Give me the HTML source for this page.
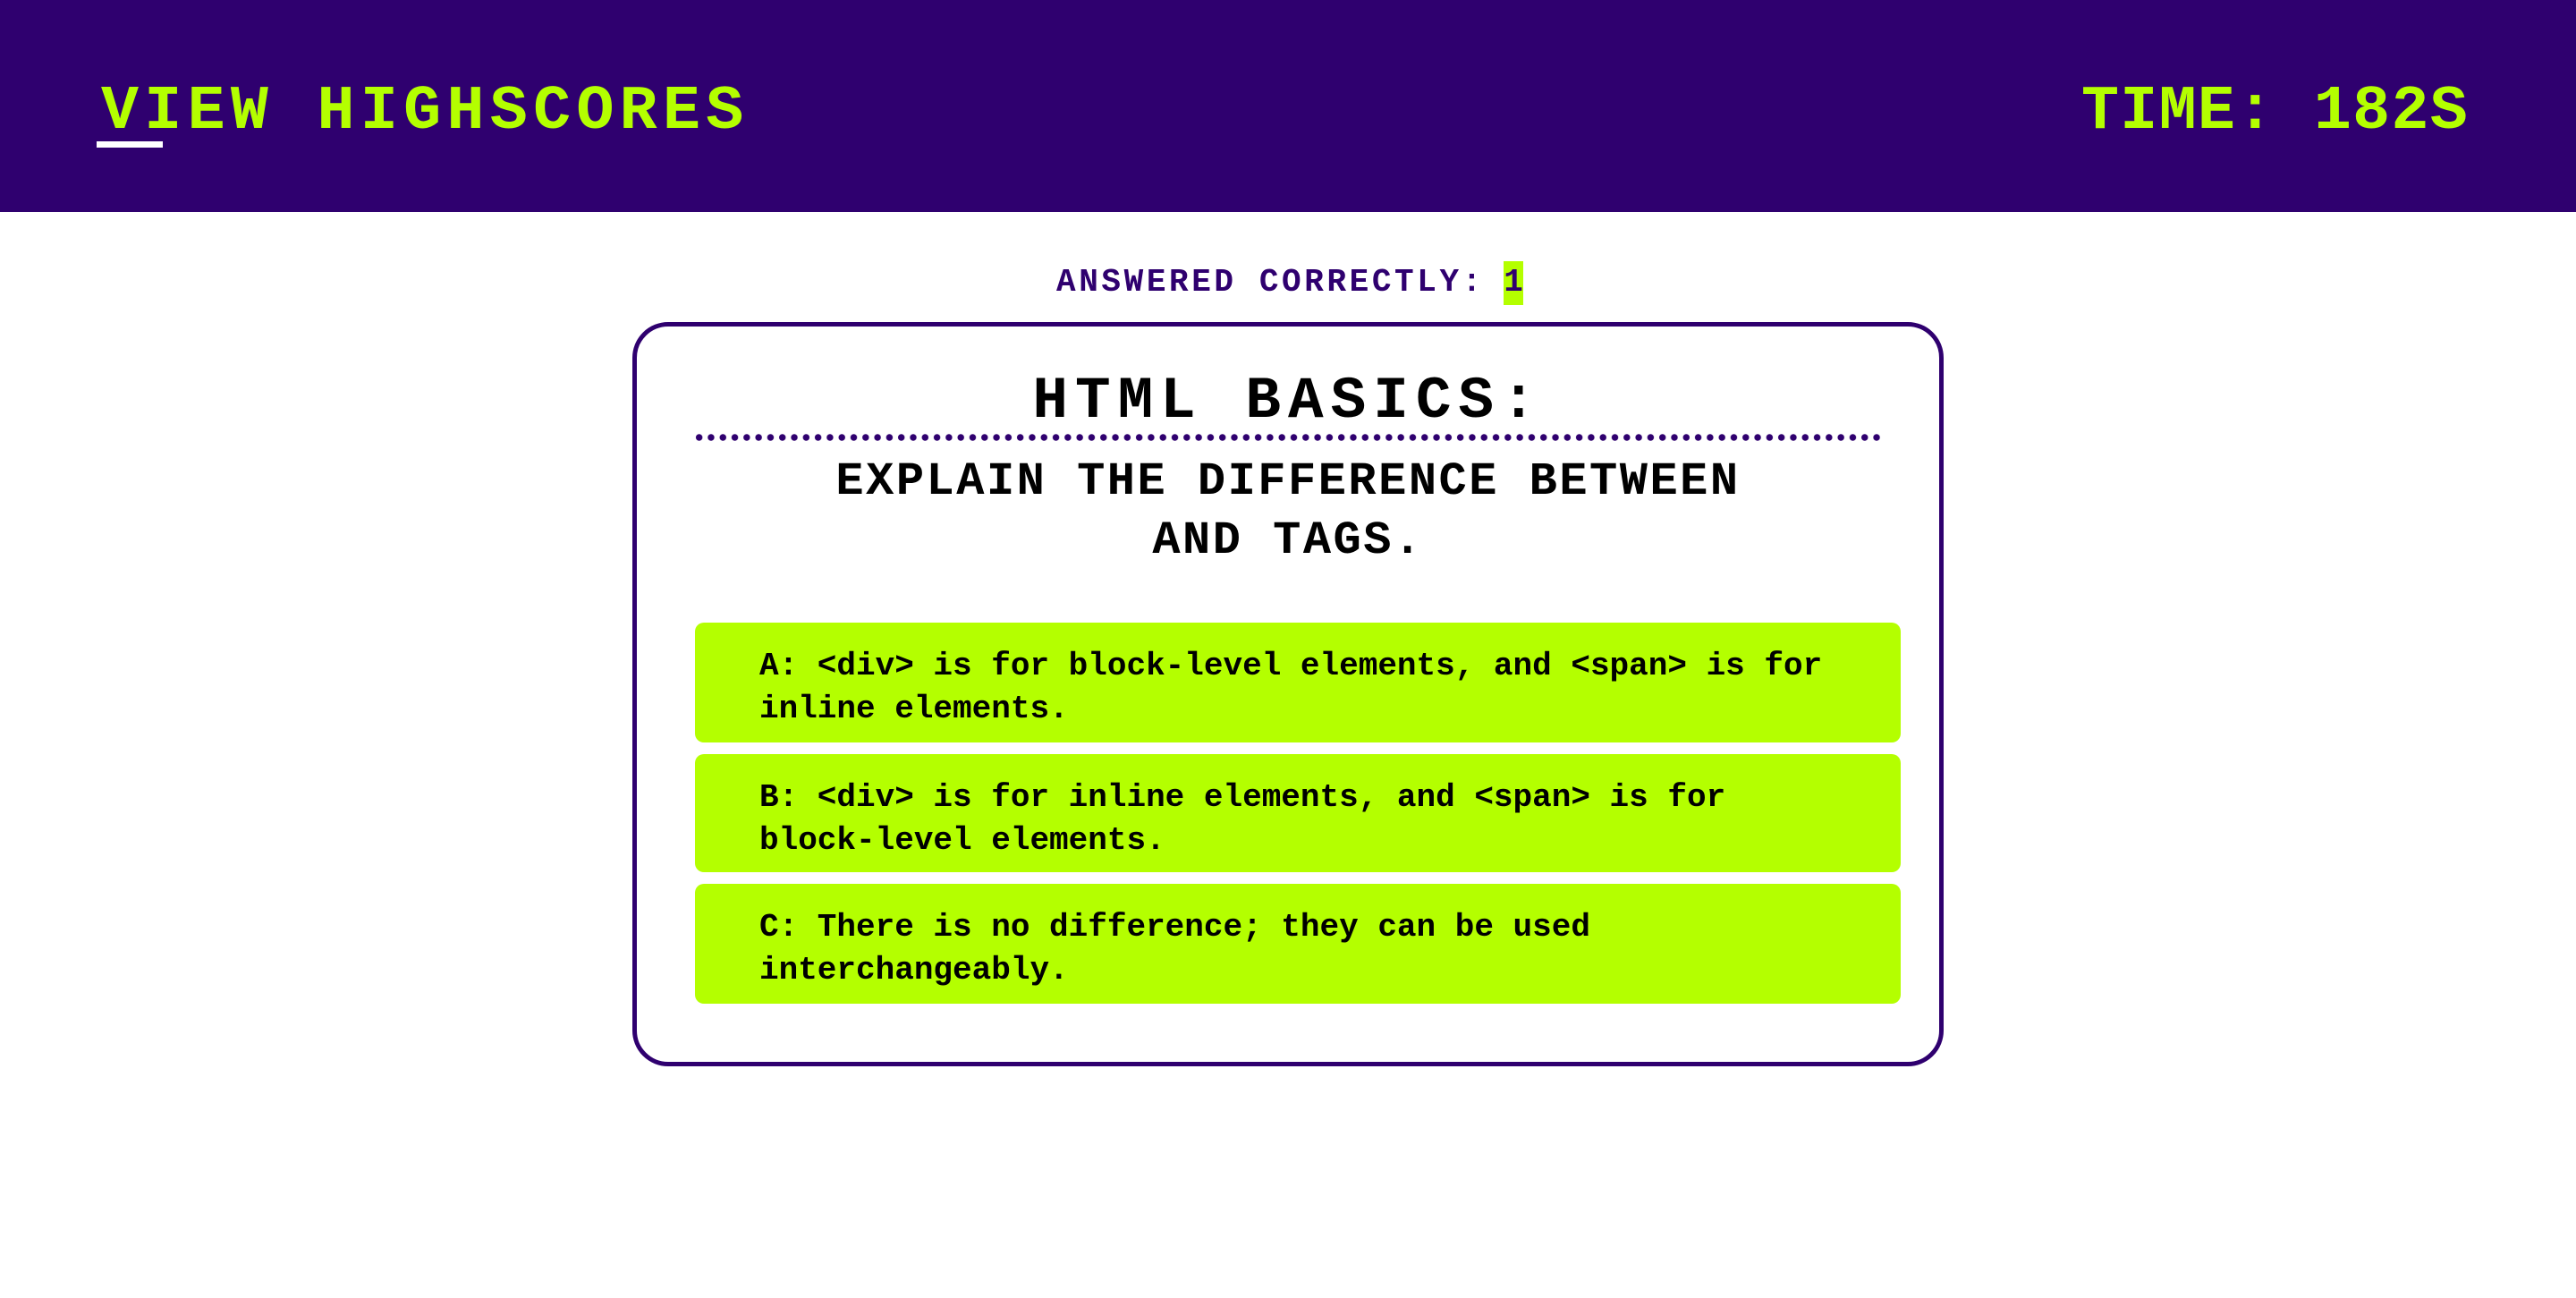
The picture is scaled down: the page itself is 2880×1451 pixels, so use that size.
<!DOCTYPE html>
<html><head><meta charset="utf-8"><style>
*{margin:0;padding:0;box-sizing:border-box}
body{width:2880px;height:1451px;background:#fff;position:relative;overflow:hidden;font-family:"Liberation Mono",monospace}
.hdr{position:absolute;left:0;top:0;width:2880px;height:237px;background:#2f006f}
.t{position:absolute;white-space:nowrap;font-weight:bold;line-height:1}
#vh{left:113px;top:91px;font-size:70px;color:#b4ff00;letter-spacing:6.3px}
#ul{position:absolute;left:108px;top:158px;width:74px;height:7px;background:#fff}
#tm{left:2327px;top:91px;font-size:70px;color:#b4ff00;letter-spacing:1.3px}
#ac{left:1181px;top:292px;font-size:36px;color:#2f006f;letter-spacing:3.6px}
#ac span{display:inline-block;background:#b4ff00;width:22px;padding:6px 0 7px;letter-spacing:0;text-align:center;margin-left:-4px}
.card{position:absolute;left:707px;top:360px;width:1466px;height:832px;border:5px solid #2f006f;border-radius:40px}
.ctr{position:absolute;left:707px;width:1466px;text-align:center;font-weight:bold;white-space:nowrap;line-height:1;color:#000}
#title{top:416px;font-size:66px;letter-spacing:8px}
#dots{position:absolute;left:775px;top:485px;width:1332px;height:8px;background:radial-gradient(circle,#2f006f 3.4px,transparent 4px) 0 0/13.3px 8px repeat-x}
#q1{top:513px;font-size:52px;letter-spacing:2.5px}
#q2{top:579px;font-size:52px;letter-spacing:2.5px}
.ans{position:absolute;left:777px;width:1348px;background:#b4ff00;border-radius:10px;padding:25px 0 0 72px;font-size:36px;font-weight:bold;line-height:48px;color:#000;white-space:pre}
</style></head><body>
<div class="hdr"></div>
<div class="t" id="vh">VIEW HIGHSCORES</div>
<div id="ul"></div>
<div class="t" id="tm">TIME: 182S</div>
<div class="t" id="ac">ANSWERED CORRECTLY: <span>1</span></div>
<div class="card"></div>
<div class="ctr" id="title">HTML BASICS:</div>
<div id="dots"></div>
<div class="ctr" id="q1">EXPLAIN THE DIFFERENCE BETWEEN</div>
<div class="ctr" id="q2">AND TAGS.</div>
<div class="ans" style="top:696px;height:134px">A: &lt;div&gt; is for block-level elements, and &lt;span&gt; is for
inline elements.</div>
<div class="ans" style="top:843px;height:132px">B: &lt;div&gt; is for inline elements, and &lt;span&gt; is for
block-level elements.</div>
<div class="ans" style="top:988px;height:134px">C: There is no difference; they can be used
interchangeably.</div>
</body></html>
